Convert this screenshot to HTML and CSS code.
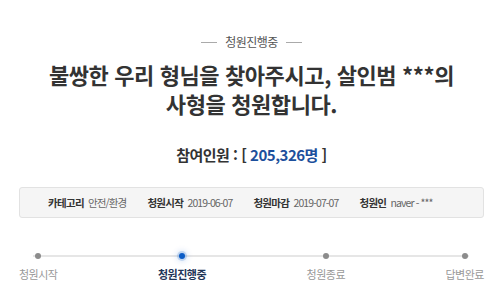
FILE: index.html
```html
<!DOCTYPE html>
<html lang="ko">
<head>
    <meta charset="UTF-8">
    <meta name="viewport" content="width=device-width, initial-scale=1.0">
    <title>청원진행중</title>
    <link rel="stylesheet" href="styles.css">
</head>
<body>
    <div class="petition">
        <div class="status">
            <span class="status-line"></span>
            <span class="status-text">청원진행중</span>
            <span class="status-line"></span>
        </div>

        <h1 class="title">불쌍한 우리 형님을 찾아주시고, 살인범 ***의<br>사형을 청원합니다.</h1>

        <p class="count">참여인원 : [ <span class="count-num">205,326명</span> ]</p>

        <ul class="info">
            <li><strong>카테고리</strong> <span>안전/환경</span></li>
            <li><strong>청원시작</strong> <span>2019-06-07</span></li>
            <li><strong>청원마감</strong> <span>2019-07-07</span></li>
            <li><strong>청원인</strong> <span>naver - ***</span></li>
        </ul>

        <ol class="steps">
            <li class="step"><span class="dot"></span><span class="step-label">청원시작</span></li>
            <li class="step active"><span class="dot"></span><span class="step-label">청원진행중</span></li>
            <li class="step"><span class="dot"></span><span class="step-label">청원종료</span></li>
            <li class="step"><span class="dot"></span><span class="step-label">답변완료</span></li>
        </ol>
    </div>
</body>
</html>
```

FILE: styles.css
```css
/* Reset and base styles */
* {
    margin: 0;
    padding: 0;
    box-sizing: border-box;
}

body {
    font-family: "Noto Sans CJK KR", "Noto Sans", sans-serif;
    color: #333;
    background: #fff;
}

.petition {
    padding: 34px 16px 0 19px;
}

/* Status header */
.status {
    display: flex;
    justify-content: center;
    align-items: center;
    gap: 8px;
    height: 16px;
}

.status-line {
    width: 16px;
    height: 1px;
    background: #aaa;
}

.status-text {
    font-size: 12px;
    line-height: 16px;
    color: #555;
    letter-spacing: -0.5px;
}

/* Title */
.title {
    margin-top: 10px;
    text-align: center;
    font-size: 22px;
    line-height: 29px;
    font-weight: 700;
    letter-spacing: -0.4px;
    color: #333;
}

.count {
    margin-top: 27px;
    text-align: center;
    font-size: 15px;
    line-height: 20px;
    font-weight: 700;
    letter-spacing: -0.5px;
    color: #333;
}

.count-num {
    color: #1c4f9c;
}

/* Info box */
.info {
    list-style: none;
    display: flex;
    align-items: center;
    gap: 21px;
    margin-top: 22px;
    height: 31px;
    padding-left: 28px;
    background: #f5f5f5;
    border: 1px solid #e2e2e2;
    border-radius: 3px;
    font-size: 10.5px;
    letter-spacing: -0.7px;
    white-space: nowrap;
}

.info li {
    flex-shrink: 0;
}

.info strong {
    color: #333;
    margin-right: 2px;
}

.info span {
    color: #666;
    letter-spacing: -0.9px;
}

/* Progress steps */
.steps {
    list-style: none;
    position: relative;
    display: flex;
    justify-content: space-between;
    margin-top: 35px;
}

.steps::before {
    content: "";
    position: absolute;
    top: 2px;
    left: 14px;
    right: 15px;
    height: 2px;
    background: #e6e6e6;
}

.step {
    position: relative;
    display: flex;
    flex-direction: column;
    align-items: center;
    gap: 8px;
}

.dot {
    width: 6px;
    height: 6px;
    border-radius: 50%;
    background: #8c8c8c;
}

.step-label {
    font-size: 11px;
    line-height: 14px;
    color: #999;
    letter-spacing: -0.5px;
}

.step.active .dot {
    background: #0b5cc6;
    box-shadow: 0 0 0 2px rgba(11, 92, 198, 0.18), 0 0 6px 2px rgba(11, 92, 198, 0.2);
}

.step.active .step-label {
    color: #1f3558;
    font-weight: 700;
}
```
